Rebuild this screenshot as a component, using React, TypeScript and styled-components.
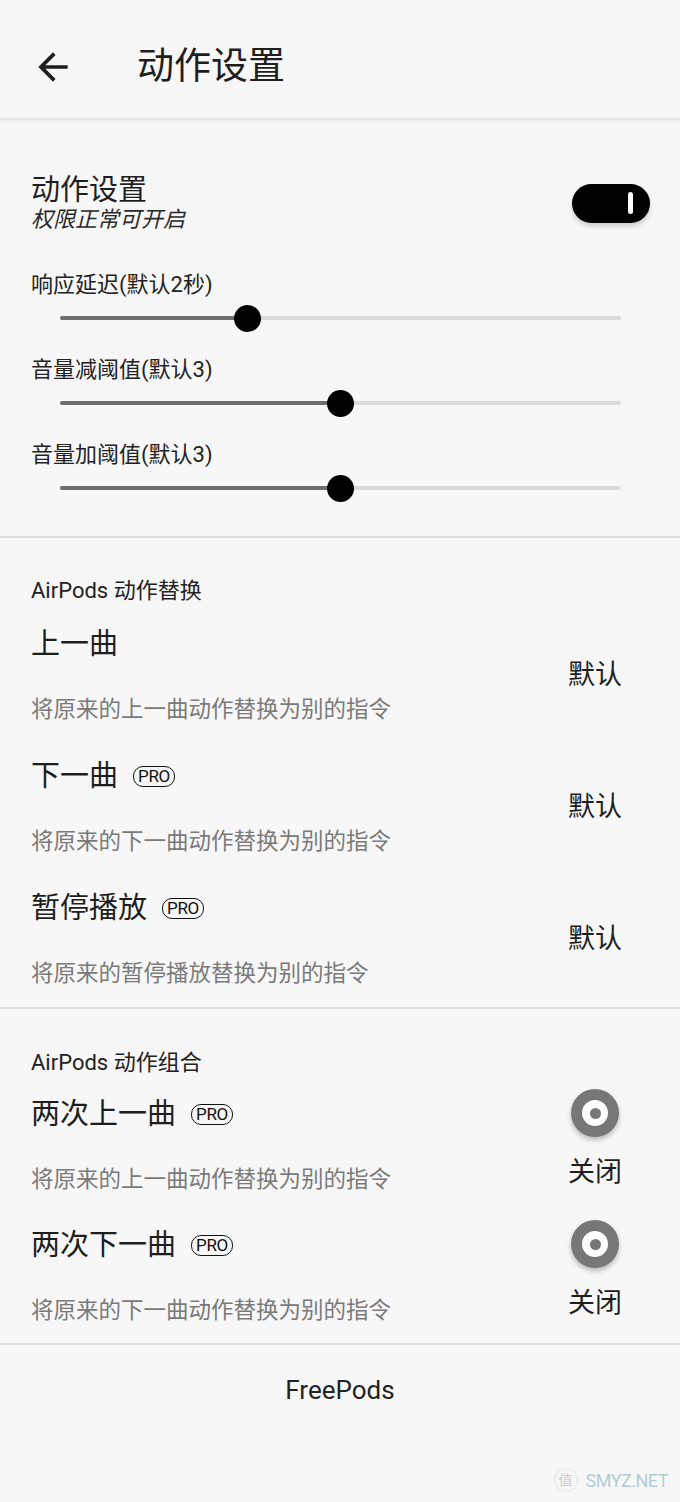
import React from 'react';
import styled, { createGlobalStyle } from 'styled-components';

const GlobalStyle = createGlobalStyle`
  html, body {
    margin: 0;
    padding: 0;
    background: #f7f7f7;
  }
  body {
    font-family: Roboto, "Noto Sans CJK SC", sans-serif;
    color: #1e1e1e;
  }
`;

const Page = styled.div`
  position: relative;
  width: 680px;
  min-height: 1502px;
  background: #f7f7f7;
`;

const Header = styled.header`
  height: 120px;
  box-sizing: border-box;
  padding-top: 16px;
  display: flex;
  align-items: center;
  border-bottom: 2px solid #e3e3e3;
  box-shadow: 0 2px 3px rgba(0, 0, 0, 0.05);
`;

const BackIcon = styled.svg`
  width: 44px;
  height: 44px;
  margin-left: 31px;
  fill: #1e1e1e;
`;

const HeaderTitle = styled.h1`
  margin: 0 0 0 62px;
  font-size: 37px;
  font-weight: 400;
  line-height: 44px;
  color: #1e1e1e;
`;

const Section = styled.section<{ $top: number; $bottom: number }>`
  padding: ${({ $top }) => $top}px 30px ${({ $bottom }) => $bottom}px 31px;
  border-bottom: 2px solid #dedede;
`;

const ToggleRow = styled.div`
  display: flex;
  align-items: center;
  justify-content: space-between;
`;

const BigTitle = styled.div`
  font-size: 29px;
  line-height: 34px;
`;

const ItalicSub = styled.div`
  font-size: 22px;
  line-height: 26px;
  font-style: italic;
  color: #2a2a2a;
`;

const Toggle = styled.div`
  width: 78px;
  height: 39px;
  border-radius: 20px;
  background: #000;
  display: flex;
  align-items: center;
  justify-content: flex-end;
  padding-right: 17px;
  box-sizing: border-box;
  box-shadow: 0 3px 5px rgba(0, 0, 0, 0.18);
`;

const ToggleBar = styled.span`
  width: 5px;
  height: 22px;
  border-radius: 3px;
  background: #fff;
`;

const SliderBlock = styled.div<{ $first?: boolean }>`
  margin-top: ${({ $first }) => ($first ? 39 : 24)}px;
`;

const Label = styled.div`
  font-size: 22px;
  line-height: 26px;
  color: #222;
`;

const Slider = styled.div`
  position: relative;
  height: 30px;
  margin: 5px 29px 0 29px;
  display: flex;
  align-items: center;
`;

const Track = styled.div`
  position: relative;
  width: 100%;
  height: 4px;
  border-radius: 2px;
  background: #dadada;
`;

const TrackFill = styled.div`
  height: 100%;
  border-radius: 2px;
  background: #6e6e6e;
`;

const Thumb = styled.div`
  position: absolute;
  top: 50%;
  width: 27px;
  height: 27px;
  margin: -13.5px 0 0 -13.5px;
  border-radius: 50%;
  background: #000;
`;

const GroupHeader = styled.div`
  font-size: 22px;
  line-height: 26px;
  color: #222;
`;

const ItemRow = styled.div<{ $gap: number }>`
  display: flex;
  align-items: center;
  justify-content: space-between;
  margin-top: ${({ $gap }) => $gap}px;
`;

const ItemText = styled.div`
  display: flex;
  flex-direction: column;
`;

const ItemTitle = styled.div`
  display: flex;
  align-items: center;
  font-size: 29px;
  line-height: 34px;
  color: #1e1e1e;
`;

const Pro = styled.span`
  margin-left: 15px;
  height: 19px;
  padding: 0 4px;
  border: 1.5px solid #111;
  border-radius: 10px;
  font-family: Roboto, sans-serif;
  font-size: 17px;
  line-height: 19px;
  letter-spacing: -0.3px;
  color: #111;
`;

const ItemDesc = styled.div`
  margin-top: 34px;
  font-size: 22.5px;
  line-height: 28px;
  color: #7a7a7a;
`;

const Value = styled.div`
  font-size: 27px;
  line-height: 32px;
  margin-right: 28px;
  color: #1e1e1e;
`;

const RadioCol = styled.div`
  display: flex;
  flex-direction: column;
  align-items: center;
  align-self: flex-start;
  margin-top: -8px;
  margin-right: 28px;
`;

const RadioOuter = styled.div`
  width: 48px;
  height: 48px;
  border-radius: 50%;
  background: #777;
  display: flex;
  align-items: center;
  justify-content: center;
  box-shadow: 0 3px 5px rgba(0, 0, 0, 0.25);
`;

const RadioInner = styled.div`
  width: 26px;
  height: 26px;
  border-radius: 50%;
  background: #fff;
  display: flex;
  align-items: center;
  justify-content: center;

  &::after {
    content: '';
    width: 11px;
    height: 11px;
    border-radius: 50%;
    background: #777;
  }
`;

const RadioLabel = styled.div`
  margin-top: 19px;
  font-size: 27px;
  line-height: 32px;
`;

const Footer = styled.div`
  padding-top: 29px;
  text-align: center;
  font-family: Roboto, sans-serif;
  font-size: 26px;
  line-height: 32px;
  color: #222;
`;

const Watermark = styled.div`
  position: absolute;
  right: 12px;
  bottom: 10px;
  display: flex;
  align-items: center;
  gap: 8px;
  opacity: 0.45;
  font-family: Roboto, "Noto Sans CJK SC", sans-serif;
`;

const WatermarkBadge = styled.span`
  width: 22px;
  height: 22px;
  border-radius: 50%;
  border: 1px solid #ccc;
  font-size: 14px;
  line-height: 22px;
  text-align: center;
  color: #999;
`;

const WatermarkText = styled.span`
  font-size: 18px;
  color: #5a9aa8;
  letter-spacing: -0.5px;
`;

const sliders = [
  { label: '响应延迟(默认2秒)', value: 0.334 },
  { label: '音量减阈值(默认3)', value: 0.5 },
  { label: '音量加阈值(默认3)', value: 0.5 },
];

const replaceItems = [
  { title: '上一曲', pro: false, desc: '将原来的上一曲动作替换为别的指令' },
  { title: '下一曲', pro: true, desc: '将原来的下一曲动作替换为别的指令' },
  { title: '暂停播放', pro: true, desc: '将原来的暂停播放替换为别的指令' },
];

const comboItems = [
  { title: '两次上一曲', desc: '将原来的上一曲动作替换为别的指令' },
  { title: '两次下一曲', desc: '将原来的下一曲动作替换为别的指令' },
];

const App: React.FC = () => {
  return (
    <Page>
      <GlobalStyle />
      <Header>
        <BackIcon viewBox='0 0 24 24'>
          <path d='M20 11H7.83l5.59-5.59L12 4l-8 8 8 8 1.41-1.41L7.83 13H20v-2z' />
        </BackIcon>
        <HeaderTitle>动作设置</HeaderTitle>
      </Header>

      <Section $top={53} $bottom={33}>
        <ToggleRow>
          <div>
            <BigTitle>动作设置</BigTitle>
            <ItalicSub>权限正常可开启</ItalicSub>
          </div>
          <Toggle>
            <ToggleBar />
          </Toggle>
        </ToggleRow>
        {sliders.map((s, i) => (
          <SliderBlock key={s.label} $first={i === 0}>
            <Label>{s.label}</Label>
            <Slider>
              <Track>
                <TrackFill style={{ width: `${s.value * 100}%` }} />
                <Thumb style={{ left: `${s.value * 100}%` }} />
              </Track>
            </Slider>
          </SliderBlock>
        ))}
      </Section>

      <Section $top={40} $bottom={20}>
        <GroupHeader>AirPods 动作替换</GroupHeader>
        {replaceItems.map((item, i) => (
          <ItemRow key={item.title} $gap={i === 0 ? 23 : 36}>
            <ItemText>
              <ItemTitle>
                {item.title}
                {item.pro && <Pro>PRO</Pro>}
              </ItemTitle>
              <ItemDesc>{item.desc}</ItemDesc>
            </ItemText>
            <Value>默认</Value>
          </ItemRow>
        ))}
      </Section>

      <Section $top={41} $bottom={19}>
        <GroupHeader>AirPods 动作组合</GroupHeader>
        {comboItems.map((item, i) => (
          <ItemRow key={item.title} $gap={i === 0 ? 21 : 35}>
            <ItemText>
              <ItemTitle>
                {item.title}
                <Pro>PRO</Pro>
              </ItemTitle>
              <ItemDesc>{item.desc}</ItemDesc>
            </ItemText>
            <RadioCol>
              <RadioOuter>
                <RadioInner />
              </RadioOuter>
              <RadioLabel>关闭</RadioLabel>
            </RadioCol>
          </ItemRow>
        ))}
      </Section>

      <Footer>FreePods</Footer>

      <Watermark>
        <WatermarkBadge>值</WatermarkBadge>
        <WatermarkText>SMYZ.NET</WatermarkText>
      </Watermark>
    </Page>
  );
};

export default App;
